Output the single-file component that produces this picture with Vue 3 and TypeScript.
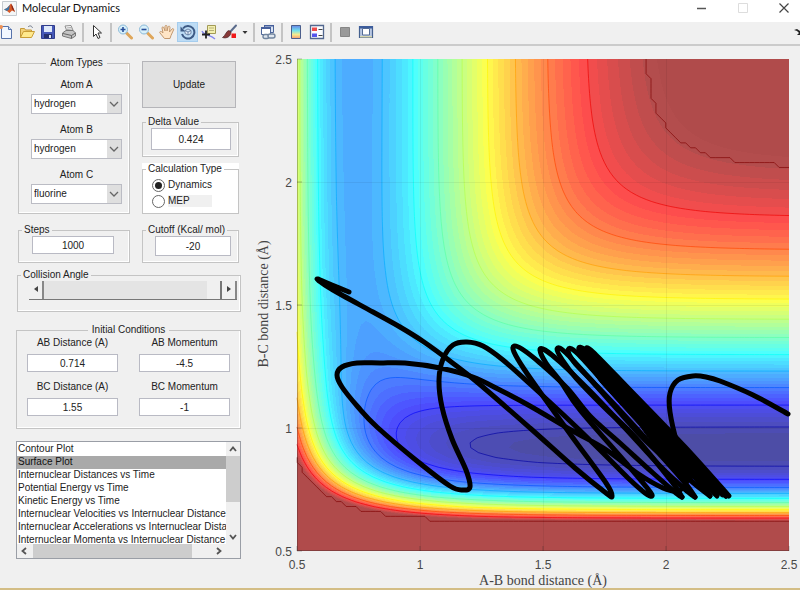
<script setup lang="ts">
import { ref } from 'vue'

type Point = [number, number]
interface Morse { depth: number; beta: number; r0: number; sato: number }

const atoms = ['hydrogen', 'fluorine', 'deuterium', 'chlorine']
const atomRows = ref([
  { id: 'atom-a', label: 'Atom A', value: 'hydrogen' },
  { id: 'atom-b', label: 'Atom B', value: 'hydrogen' },
  { id: 'atom-c', label: 'Atom C', value: 'fluorine' },
])
const delta = ref('0.424')
const calculation = ref('dynamics')
const steps = ref('1000')
const cutoff = ref('-20')
const angle = ref(180)
const conditions = ref([
  { id: 'ab-dist', label: 'AB Distance (A)', value: '0.714' },
  { id: 'ab-mom', label: 'AB Momentum', value: '-4.5' },
  { id: 'bc-dist', label: 'BC Distance (A)', value: '1.55' },
  { id: 'bc-mom', label: 'BC Momentum', value: '-1' },
])
const plotTypes = [
  'Contour Plot',
  'Surface Plot',
  'Internuclear Distances vs Time',
  'Potential Energy vs Time',
  'Kinetic Energy vs Time',
  'Internuclear Velocities vs Internuclear Distance',
  'Internuclear Accelerations vs Internuclear Distance',
  'Internuclear Momenta vs Internuclear Distance',
]
const plotType = ref('Surface Plot')

// LEPS potential energy surface for collinear H + H-F, in kcal/mol
const HH: Morse = { depth: 109.5, beta: 1.942, r0: 0.7414, sato: 0.2 }
const HF: Morse = { depth: 141.2, beta: 2.2187, r0: 0.917, sato: 0.167 }
const terms = (m: Morse, r: number): Point => {
  const e = Math.exp(-m.beta * (r - m.r0))
  const k = m.sato
  const c = m.depth / (4 * (1 + k))
  return [c * ((3 + k) * e * e - (2 + 6 * k) * e), c * ((1 + 3 * k) * e * e - (6 + 2 * k) * e)]
}
const energy = (ab: number, bc: number): number => {
  const [q1, j1] = terms(HH, ab)
  const [q2, j2] = terms(HF, bc)
  const [q3, j3] = terms(HF, ab + bc)
  return q1 + q2 + q3 - Math.sqrt(((j1 - j2) ** 2 + (j2 - j3) ** 2 + (j3 - j1) ** 2) / 2)
}

const N = 100
const LEFT = 297
const TOP = 59
const SIZE = 492
const px = (i: number) => LEFT + (i * SIZE) / N
const py = (j: number) => TOP + SIZE - (j * SIZE) / N
const field: number[][] = []
for (let j = 0; j <= N; j++) {
  const row: number[] = []
  for (let i = 0; i <= N; i++) row.push(energy(0.5 + i * 0.02, 0.5 + j * 0.02))
  field.push(row)
}
const mask = field.map(row => row.map(v => (v > -22.2 ? 1 : -20)))

const clamp = (v: number) => Math.max(0, Math.min(1, v))
const jet = (level: number, alpha: number): string => {
  const f = clamp((level + 141) / 121)
  const mix = (v: number) => Math.round(255 * (clamp(v) * alpha + 1 - alpha))
  return `rgb(${mix(1.5 - Math.abs(4 * f - 3))},${mix(1.5 - Math.abs(4 * f - 2))},${mix(1.5 - Math.abs(4 * f - 1))})`
}

const fix = (p: Point) => `${p[0].toFixed(2)} ${p[1].toFixed(2)}`

// Area of one grid cell below the level, and the level line that bounds it
const cell = (data: number[][], i: number, j: number, level: number) => {
  const corner: Point[] = [[i, j], [i + 1, j], [i + 1, j + 1], [i, j + 1]]
  const area: Point[] = []
  const cuts: Point[] = []
  for (let k = 0; k < 4; k++) {
    const a = corner[k]
    const b = corner[(k + 1) % 4]
    const va = data[a[1]][a[0]]
    const vb = data[b[1]][b[0]]
    if (va <= level) area.push([px(a[0]), py(a[1])])
    if (va <= level !== vb <= level) {
      const t = (level - va) / (vb - va)
      const p: Point = [px(a[0] + (b[0] - a[0]) * t), py(a[1] + (b[1] - a[1]) * t)]
      area.push(p)
      cuts.push(p)
    }
  }
  return { area, cuts }
}

const linePath = (data: number[][], level: number): string => {
  let d = ''
  for (let j = 0; j < N; j++)
    for (let i = 0; i < N; i++) {
      const { cuts } = cell(data, i, j, level)
      for (let k = 0; k + 1 < cuts.length; k += 2) d += `M${fix(cuts[k])}L${fix(cuts[k + 1])}`
    }
  return d
}

const areaPath = (level: number): string => {
  let d = ''
  for (let j = 0; j < N; j++) {
    let start = -1
    for (let i = 0; i <= N; i++) {
      const full = i < N && field[j][i] <= level && field[j][i + 1] <= level && field[j + 1][i] <= level && field[j + 1][i + 1] <= level
      if (full && start < 0) start = i
      if (!full && start >= 0) {
        d += `M${fix([px(start), py(j)])}H${px(i).toFixed(2)}V${py(j + 1).toFixed(2)}H${px(start).toFixed(2)}Z`
        start = -1
      }
      if (!full && i < N) {
        const { area } = cell(field, i, j, level)
        if (area.length > 2) d += 'M' + area.map(fix).join('L') + 'Z'
      }
    }
  }
  return d
}

const STEP = 10.4
const BASE = -136.8
const bands: { d: string; fill: string }[] = []
for (let n = 56; n >= -1; n--) {
  const level = BASE + (n * STEP) / 5
  if (level < -20) bands.push({ d: areaPath(level), fill: jet(level - 2, 0.7) })
}
const lines: { d: string; stroke: string }[] = []
for (let n = 0; n <= 10; n++) {
  const level = BASE + n * STEP
  lines.push({ d: linePath(field, level), stroke: jet(level, 1) })
}
const cliff = linePath(mask, 0)

const ticks = [
  { x: 297, y: 551, label: '0.5' },
  { x: 420, y: 428, label: '1' },
  { x: 543, y: 305, label: '1.5' },
  { x: 666, y: 182, label: '2' },
  { x: 789, y: 59, label: '2.5' },
]

// Smooth curve through the sampled trajectory points
const smooth = (pts: Point[]): string => {
  let d = `M${pts[0][0]} ${pts[0][1]}`
  for (let i = 0; i + 1 < pts.length; i++) {
    const p0 = pts[Math.max(0, i - 1)]
    const p1 = pts[i]
    const p2 = pts[i + 1]
    const p3 = pts[Math.min(pts.length - 1, i + 2)]
    const c1: Point = [p1[0] + (p2[0] - p0[0]) / 6, p1[1] + (p2[1] - p0[1]) / 6]
    const c2: Point = [p2[0] - (p3[0] - p1[0]) / 6, p2[1] - (p3[1] - p1[1]) / 6]
    d += `C${fix(c1)} ${fix(c2)} ${fix(p2)}`
  }
  return d
}
const trajectory = [
  smooth([[349, 292], [332, 285], [317, 279], [333, 290], [373, 312], [400, 327], [424, 342], [450, 361], [477, 382], [530, 428], [575, 468], [606, 493], [612, 496], [606, 483], [573, 438], [545, 399], [524, 369], [514, 352], [514, 346], [522, 349], [540, 363], [567, 388], [590, 416], [620, 443], [653, 473], [676, 493], [682, 497]]),
  smooth([[788, 414], [753, 395], [720, 381], [706, 377], [693, 376], [678, 380], [670, 393], [670, 412], [677, 443], [687, 472], [686, 483], [678, 491], [663, 488], [637, 473], [605, 449], [571, 430], [530, 406], [498, 389], [473, 377], [440, 368], [405, 363], [380, 363], [357, 363], [342, 367], [337, 375], [342, 387], [358, 407], [377, 427], [417, 461], [450, 486], [463, 490], [470, 487], [466, 470], [452, 439], [442, 407], [439, 380], [443, 359], [453, 345], [467, 342], [483, 346], [503, 360], [530, 384], [570, 421], [602, 452], [628, 478], [645, 493], [652, 496], [648, 489], [626, 463], [580, 410], [561, 382], [546, 363], [540, 350], [545, 350], [560, 362], [590, 391], [625, 428], [660, 466], [688, 492], [695, 497]]),
  smooth([[682, 497], [672, 482], [635, 437], [605, 408], [576, 378], [563, 361], [557, 349], [566, 353], [600, 390], [645, 440], [690, 480], [710, 496]]),
  smooth([[695, 497], [680, 477], [625, 416], [592, 381], [574, 362], [568, 350], [578, 354], [620, 400], [670, 450], [717, 496]]),
  smooth([[710, 496], [685, 466], [630, 410], [596, 373], [579, 350], [590, 354], [640, 406], [695, 464], [726, 496]]),
  smooth([[726, 496], [700, 466], [648, 413], [610, 372], [588, 351], [593, 352], [630, 390], [685, 447], [729, 496]]),
]
const bundle = 'M579 350L592 349L620 381L643 404L679 441L731 496L722 497L706 485L693 478L686 482L657 450L640 426L600 382Z'
</script>

<template>
  <div class="window">
    <header class="titlebar">
      <svg class="logo" viewBox="0 0 15 15" aria-hidden="true">
        <path d="M.5.5h14v14H.5z" fill="#f4f6f7" stroke="#c5cbd0" />
        <path d="M2 8.500 5 7l4-4.500 1.500 2.500 2.500 6-3-1.500-2.500 2.500L5 10z" fill="#d95a27" />
        <path d="M2 8.500 5 7l3-3-1 4.500L5 10z" fill="#3b78a8" />
        <path d="M9 2.500 10 8l3 3-2.500-6z" fill="#8c2818" />
      </svg>
      <h1>Molecular Dynamics</h1>
      <div class="controls">
        <button aria-label="Minimize"><svg viewBox="0 0 12 12"><path d="M1 6.500h9" stroke="#555" stroke-width="1.500" /></svg></button>
        <button aria-label="Maximize" disabled><svg viewBox="0 0 12 12"><path d="M1.500 1.500h9v9h-9z" fill="none" stroke="#ddd" /></svg></button>
        <button aria-label="Close"><svg viewBox="0 0 12 12"><path d="m1.500 1.500 9 9m0-9-9 9" stroke="#444" stroke-width="1.200" /></svg></button>
      </div>
    </header>

    <nav class="toolbar" aria-label="Figure tools">
      <button aria-label="New"><svg viewBox="0 0 16 16"><path d="M3.500 2.500h7l3 3v9h-10z" fill="#f2f7ff" stroke="#5773ab" /><path d="M10.500 2.500v3h3" fill="#cfdef5" stroke="#5773ab" /><circle cx="3" cy="3" r="2" fill="#ee9155" /></svg></button>
      <button aria-label="Open"><svg viewBox="0 0 16 16"><path d="M1.500 13.500v-9h4l1 1.500h6v2" fill="#f3d27a" stroke="#c49a3b" /><path d="m1.500 13.500 3-6h11l-3 6z" fill="#ffe98d" stroke="#c99d36" /><path d="M9 3c2-2 4-1 4.500 1" fill="none" stroke="#6d7788" /></svg></button>
      <button aria-label="Save"><svg viewBox="0 0 16 16"><path d="M1.500 1.500h13v13h-13z" fill="#4658b8" stroke="#303d8c" /><path d="M4 2h8v6H4z" fill="#dfe9fa" /><path d="M4 10h8v4H4z" fill="#26306d" /><path d="M9 11h2v3H9z" fill="#d8def2" /></svg></button>
      <button aria-label="Print"><svg viewBox="0 0 16 16"><path d="m4 2 6-.500 2.500 6H6z" fill="#fff" stroke="#8c8c8c" /><path d="m1.500 9 3.500-2.500h7l2.500 2.500v3l-4 2.500-9-2.500z" fill="#c4c4c4" stroke="#777" /><path d="m2 9.500 8.500 2v3M10.500 11.500l4-2.500" fill="none" stroke="#666" /><path d="m5.500 4 5-.500M6 5.500l5-.500" stroke="#aaa" /></svg></button>
      <i class="sep" />
      <button aria-label="Select"><svg viewBox="0 0 16 16"><path d="M4.500 1.500v11L7 10l2 4.500 2-1L9 9h3.500z" fill="#fff" stroke="#333" /></svg></button>
      <i class="sep" />
      <button aria-label="Zoom in"><svg viewBox="0 0 16 16"><path d="m9.500 9 5 5" stroke="#dfa65a" stroke-width="3" stroke-linecap="round" /><circle cx="6" cy="5.500" r="4.500" fill="#d8f0fa" stroke="#8ab9d8" /><path d="M3.500 5.500h5M6 3v5" stroke="#294f9a" stroke-width="1.600" /></svg></button>
      <button aria-label="Zoom out"><svg viewBox="0 0 16 16"><path d="m9.500 9 5 5" stroke="#dfa65a" stroke-width="3" stroke-linecap="round" /><circle cx="6" cy="5.500" r="4.500" fill="#d8f0fa" stroke="#8ab9d8" /><path d="M3.500 5.500h5" stroke="#294f9a" stroke-width="1.600" /></svg></button>
      <button aria-label="Pan"><svg viewBox="0 0 16 16"><path d="M5.500 14.500 1 9c-1-1.500 1-2 2-1l1 1-1-5c0-1.500 1.500-1.500 2 0l1 3V2.500c0-1.500 2-1.500 2 0V7l1-4c.5-1.500 2-1 2 .5L10.500 8 13 5c1-1 2 0 1.500 1L12 11.500l-1 3z" fill="#ffe5c6" stroke="#c2986f" /></svg></button>
      <button class="active" aria-label="Rotate 3D" aria-pressed="true"><svg viewBox="0 0 16 16"><path d="M3 4.500A6.300 6.300 0 1 1 2 10" fill="none" stroke="#3d5a85" stroke-width="2" /><path d="M.5 2.500v5h5z" fill="#3d5a85" /><path d="m8 5 3 1.500v3L8 11 5 9.500v-3zM5 6.500 8 8l3-1.500M8 8v3" fill="#e4eefa" stroke="#566f96" stroke-width=".8" /></svg></button>
      <button aria-label="Data cursor"><svg viewBox="0 0 16 16"><path d="M6.500 1.500h8v8h-8z" fill="#f3efb0" stroke="#a29a55" /><path d="M8 4h5M8 6.500h5" stroke="#b7b078" /><path d="M1 7c2 5 8 3 13 8" fill="none" stroke="#8588ed" stroke-width="1.300" /><path d="M1 10.500h8M5 6.500v8" stroke="#222" stroke-width="1.800" /></svg></button>
      <button aria-label="Brush"><svg viewBox="0 0 16 16"><path d="m8 8 6-6.500" stroke="#5a6b8b" stroke-width="2" stroke-linecap="round" /><path d="M9 8 7 6.500C4 7 4 11 .5 13.500 5 15 9 12 9 8z" fill="#883838" stroke="#4a2528" stroke-width=".7" /><path d="M9.500 9.500h4.500V14H9.500z" fill="#f01919" /></svg></button>
      <button class="drop" aria-label="Brush options"><svg viewBox="0 0 10 16"><path d="M2.500 7h5L5 10z" fill="#333" /></svg></button>
      <i class="sep" />
      <button aria-label="Link plot"><svg viewBox="0 0 16 16"><path d="M4.500 1.500h9v7h-9z" fill="#d9e4f4" stroke="#4c659a" /><path d="M1.500 3.500h9v7h-9z" fill="#fff" stroke="#4c659a" /><path d="M1 3h10v2H1zM4 1h10v1.500H4z" fill="#465f9b" /><rect x="3" y="10.500" width="6" height="4" rx="2" fill="#dfe6ee" stroke="#71859f" stroke-width="1.400" /><rect x="8" y="10" width="7" height="4" rx="2" fill="#dfe6ee" stroke="#71859f" stroke-width="1.400" /></svg></button>
      <i class="sep" />
      <button aria-label="Insert colorbar"><svg viewBox="0 0 16 16"><defs><linearGradient id="bar" x2="0" y2="1"><stop stop-color="#6685e8" /><stop offset=".4" stop-color="#72e3ed" /><stop offset=".7" stop-color="#f8eb8b" /><stop offset="1" stop-color="#f29b73" /></linearGradient></defs><path d="M3.500 1.500h9v13h-9z" fill="url(#bar)" stroke="#4c5f8c" /></svg></button>
      <button aria-label="Insert legend"><svg viewBox="0 0 16 16"><path d="M1.500 1.500h13v13h-13z" fill="#fbfcff" stroke="#52678f" stroke-width="1.300" /><path d="M3 3.500h5v3.500H3z" fill="#ef4a4a" /><path d="M3 9.500h5V13H3z" fill="#5555eb" /><path d="M9.500 5.500h4M9.500 11.500h4" stroke="#444" /></svg></button>
      <i class="sep" />
      <button aria-label="Hide plot tools"><svg viewBox="0 0 16 16"><path d="M3.500 3.500h9v9h-9z" fill="#999" stroke="#858585" /></svg></button>
      <button aria-label="Show plot tools"><svg viewBox="0 0 16 16"><path d="M1.500 2.500h13v11h-13z" fill="#b9c8e2" stroke="#45618f" stroke-width="1.200" /><path d="M1 2h14v2.500H1z" fill="#3d5d9c" /><path d="M4.500 4.500h7v6.500h-7z" fill="#fff" stroke="#536b94" /><path d="M2 12h12v1.500H2z" fill="#d8d7ad" /></svg></button>
      <button class="dock" aria-label="Dock figure"><svg viewBox="0 0 16 16"><path d="m3 6 3-1 3 2 2-1v5H6l2-2-2-2z" fill="#222" /></svg></button>
    </nav>

    <main>
      <form class="panel" @submit.prevent>
        <div class="pair">
          <fieldset class="atoms">
            <legend>Atom Types</legend>
            <div v-for="row in atomRows" :key="row.id" class="atom">
              <label :for="row.id">{{ row.label }}</label>
              <div class="combo">
                <select :id="row.id" v-model="row.value">
                  <option v-for="a in atoms" :key="a">{{ a }}</option>
                </select>
                <svg viewBox="0 0 14 18" aria-hidden="true"><path d="m3 7 4 4 4-4" fill="none" stroke="#666" stroke-width="1.300" /></svg>
              </div>
            </div>
          </fieldset>
          <div class="side">
            <button class="update" type="submit">Update</button>
            <fieldset class="delta">
              <legend>Delta Value</legend>
              <div class="field"><input v-model="delta" aria-label="Delta Value" type="text"></div>
            </fieldset>
            <div class="white">
              <fieldset class="calc">
                <legend>Calculation Type</legend>
                <label><input v-model="calculation" type="radio" name="calc" value="dynamics">Dynamics</label>
                <label><input v-model="calculation" type="radio" name="calc" value="mep"><span class="shade">MEP</span></label>
              </fieldset>
            </div>
          </div>
        </div>

        <div class="pair small">
          <fieldset class="steps">
            <legend>Steps</legend>
            <div class="field"><input v-model="steps" aria-label="Steps" type="text"></div>
          </fieldset>
          <fieldset class="cutoff">
            <legend>Cutoff (Kcal/ mol)</legend>
            <div class="field"><input v-model="cutoff" aria-label="Cutoff (Kcal/ mol)" type="text"></div>
          </fieldset>
        </div>

        <fieldset class="collision">
          <legend>Collision Angle</legend>
          <div class="slider">
            <button type="button" aria-label="Decrease angle" @click="angle = Math.max(0, angle - 1)"><svg viewBox="0 0 8 8"><path d="M6 1v6L2 4z" fill="#444" /></svg></button>
            <input v-model.number="angle" type="range" min="0" max="180" aria-label="Collision Angle">
            <button type="button" aria-label="Increase angle" @click="angle = Math.min(180, angle + 1)"><svg viewBox="0 0 8 8"><path d="M2 1v6l4-3z" fill="#444" /></svg></button>
          </div>
        </fieldset>

        <fieldset class="initial">
          <legend>Initial Conditions</legend>
          <div v-for="c in conditions" :key="c.id" class="condition">
            <label :for="c.id">{{ c.label }}</label>
            <input :id="c.id" v-model="c.value" type="text">
          </div>
        </fieldset>

        <div class="listbox">
          <select v-model="plotType" size="8" aria-label="Plot type">
            <option v-for="p in plotTypes" :key="p">{{ p }}</option>
          </select>
          <div class="vbar">
            <svg viewBox="0 0 14 14"><path d="m4 9 3-3.500L10 9" fill="none" stroke="#555" stroke-width="1.800" /></svg>
            <div class="vthumb" />
            <svg viewBox="0 0 14 14"><path d="m4 5 3 3.500L10 5" fill="none" stroke="#555" stroke-width="1.800" /></svg>
          </div>
          <div class="hbar">
            <svg viewBox="0 0 14 14"><path d="M9 4 5.500 7 9 10" fill="none" stroke="#555" stroke-width="1.800" /></svg>
            <div class="hthumb" />
            <svg viewBox="0 0 14 14"><path d="M5 4l3.500 3L5 10" fill="none" stroke="#555" stroke-width="1.800" /></svg>
          </div>
        </div>
      </form>

      <svg class="plot" viewBox="250 46 550 542" role="img" aria-label="Potential energy surface with trajectory">
        <rect x="297" y="59" width="492" height="492" fill="#b04b4b" />
        <g shape-rendering="crispEdges">
          <path v-for="(b, i) in bands" :key="i" :d="b.d" :fill="b.fill" />
        </g>
        <g class="contours">
          <path v-for="(l, i) in lines" :key="i" :d="l.d" :stroke="l.stroke" />
          <path :d="cliff" class="cliff" />
        </g>
        <g class="grid">
          <path v-for="t in ticks.slice(1, 4)" :key="t.label" :d="`M${t.x + 0.5} 59V551M297 ${t.y + 0.5}H789`" />
        </g>
        <path class="frame" d="M297.500 59V550.500H789" />
        <path v-for="t in ticks" :key="t.label" class="tick" :d="`M${t.x} 551v-5M297 ${t.y}h5`" />
        <g class="trajectory">
          <path v-for="(d, i) in trajectory" :key="i" :d="d" />
          <path :d="bundle" class="bundle" />
        </g>
        <g class="labels">
          <text v-for="t in ticks" :key="t.label" :x="t.x" y="569" text-anchor="middle">{{ t.label }}</text>
          <text v-for="t in ticks" :key="t.label" x="292" :y="t.y + 5" text-anchor="end">{{ t.label }}</text>
        </g>
        <g class="axis">
          <text x="543" y="585" text-anchor="middle">A-B bond distance (Å)</text>
          <text transform="translate(268 304) rotate(-90)" text-anchor="middle">B-C bond distance (Å)</text>
        </g>
      </svg>
    </main>
  </div>
</template>

<style>
body {
  background: #f0f0f0;
}
</style>

<style scoped>
* {
  box-sizing: border-box;
}
.window {
  background: #f0f0f0;
  border-bottom: 2px solid #d3bd85;
  color: #222;
  font: 10px/12px "Liberation Sans", Arial, sans-serif;
  overflow: hidden;
}
button,
input,
select {
  font: inherit;
  color: inherit;
  margin: 0;
}
.titlebar {
  display: flex;
  align-items: center;
  height: 22px;
  padding: 0 6px 6px 2px;
  background: #fff;
}
.logo {
  width: 15px;
  height: 15px;
}
h1 {
  margin: 0 0 0 5px;
  font: 11px/16px Lato, "Open Sans", sans-serif;
  color: #111;
}
.controls {
  display: flex;
  gap: 21px;
  margin-left: auto;
}
.controls button {
  width: 20px;
  height: 16px;
  padding: 0;
  border: 0;
  background: none;
}
.controls svg {
  display: block;
  width: 12px;
  height: 12px;
  margin: 2px auto;
}
.toolbar {
  display: flex;
  height: 24px;
  padding-bottom: 1px;
  margin-left: -5px;
  border-bottom: 2px solid #cbcbcb;
}
.toolbar button {
  flex: none;
  display: flex;
  align-items: center;
  justify-content: center;
  width: 21px;
  height: 20px;
  padding: 0;
  border: 0;
  background: none;
}
.toolbar svg {
  width: 16px;
  height: 16px;
}
.toolbar .active {
  background: #bddcf5;
  box-shadow: inset 0 0 0 1px #a5cdee;
}
.toolbar .drop {
  width: 10px;
}
.toolbar .drop svg {
  width: 10px;
}
.toolbar .dock {
  margin: 0 -9px 0 auto;
}
.sep {
  flex: none;
  width: 2px;
  height: 19px;
  margin: 1px 2px 0 3px;
  background: #c4c4c4;
}
main {
  display: flex;
  align-items: flex-start;
}
.panel {
  flex: none;
  width: 250px;
  padding: 11px 9px 0 16px;
}
.plot {
  display: block;
  flex: 1;
  min-width: 0;
}
fieldset {
  min-width: 0;
  margin: 0;
  padding: 0;
  border: 1px solid #c4c4c4;
  box-shadow: inset -1px -1px 0 #fff;
}
legend {
  margin-left: 3px;
  padding: 0 2px;
  line-height: 12px;
  white-space: nowrap;
}
.pair {
  display: grid;
  grid-template-columns: 112px 97px;
  gap: 12px;
  padding-left: 2px;
}
.atoms {
  display: flex;
  flex-direction: column;
  height: 157px;
  padding: 10px 7px 0 12px;
}
.atoms legend,
.initial legend {
  margin: 0 auto;
  padding: 0 4px;
}
.atom {
  display: grid;
  gap: 3px;
  margin-bottom: 10px;
}
.atom label {
  text-align: center;
}
.combo {
  display: flex;
  position: relative;
}
.combo select {
  flex: 1;
  height: 20px;
  padding: 0 0 0 2px;
  border: 1px solid #bbbcc4;
  border-radius: 0;
  background: #fff;
  appearance: none;
}
.combo svg {
  position: absolute;
  right: 1px;
  top: 1px;
  width: 14px;
  height: 18px;
  background: #dfdfdf;
  pointer-events: none;
}
.side {
  display: flex;
  flex-direction: column;
  padding-top: 4px;
}
.update {
  height: 47px;
  margin-right: 3px;
  border: 1px solid #b5b5b9;
  background: #e1e1e1;
}
.delta {
  height: 41px;
  margin-top: 8px;
}
.field {
  padding: 0 7px 0 8px;
}
input[type="text"] {
  display: block;
  width: 100%;
  height: 18px;
  padding: 0;
  border: 1px solid #b9bac4;
  background: #fff;
  text-align: center;
}
.delta input[type="text"] {
  height: 22px;
}
.white {
  margin-top: 6px;
  background: #fff;
}
.calc {
  height: 51px;
}
.calc label {
  display: flex;
  align-items: center;
  gap: 3px;
  height: 16px;
  padding-left: 9px;
}
.calc legend + label {
  margin-top: 2px;
}
.calc input {
  flex: none;
  display: grid;
  place-items: center;
  width: 13px;
  height: 13px;
  border: 1px solid #666;
  border-radius: 50%;
  background: #fff;
  appearance: none;
}
.calc input:checked::before {
  content: "";
  width: 7px;
  height: 7px;
  border-radius: 50%;
  background: #222;
}
.shade {
  width: 44px;
  background: #f0f0f0;
}
.small {
  margin-top: 10px;
}
.steps,
.cutoff {
  height: 39px;
}
.steps .field {
  padding: 0 15px 0 13px;
}
.cutoff .field {
  padding: 0 7px 0 12px;
}
.cutoff input[type="text"] {
  height: 20px;
}
.collision {
  height: 43px;
  margin: 6px 0 0 1px;
}
.slider {
  display: flex;
  height: 19px;
  margin: 0 3px 0 11px;
  border-bottom: 1px solid #777;
}
.slider button {
  flex: none;
  width: 15px;
  padding: 0;
  border: 0;
  border-right: 2px solid #888;
  background: #f0f0f0;
}
.slider svg {
  width: 8px;
  height: 8px;
}
.slider input {
  flex: 1;
  min-width: 0;
  height: 18px;
  background: #e4e4e4;
  appearance: none;
}
.slider input::-webkit-slider-thumb {
  width: 15px;
  height: 18px;
  border-right: 2px solid #777;
  background: #f0f0f0;
  appearance: none;
}
.initial {
  display: grid;
  grid-template-columns: 91px 91px;
  column-gap: 21px;
  row-gap: 9px;
  align-content: start;
  height: 105px;
  margin-top: 12px;
  padding: 1px 10px 0;
}
.condition {
  display: grid;
  align-content: start;
  gap: 5px;
  text-align: center;
}
.listbox {
  display: grid;
  grid-template: 102px 14px / 1fr 14px;
  margin-top: 12px;
  border: 1px solid #9a9ea6;
}
.listbox select {
  min-width: 0;
  height: 102px;
  padding: 1px 0 0;
  border: 0;
  border-radius: 0;
  outline: 0;
  background: #fff;
  overflow: hidden;
  scrollbar-width: none;
}
.listbox option {
  height: 13px;
  min-height: 13px;
  padding: 0 1px;
  line-height: 13px;
  color: #222;
}
.listbox option:checked {
  background: #a9a9a9 linear-gradient(#a9a9a9, #a9a9a9);
  color: #111;
}
.vbar,
.hbar {
  display: flex;
  align-items: center;
}
.vbar {
  flex-direction: column;
  justify-content: space-between;
}
.vbar svg,
.hbar svg {
  flex: none;
  width: 14px;
  height: 14px;
}
.vthumb {
  width: 14px;
  height: 46px;
  margin-bottom: auto;
  background: #cdcdcd;
}
.hbar {
  gap: 2px;
}
.hthumb {
  width: 159px;
  height: 14px;
  margin-right: 18px;
  background: #cdcdcd;
}
.contours path {
  fill: none;
  stroke-width: 1;
  opacity: 0.65;
}
.contours .cliff {
  stroke: #800000;
}
.grid path {
  stroke: #000;
  stroke-opacity: 0.06;
}
.frame,
.tick {
  fill: none;
  stroke: #222;
  stroke-opacity: 0.3;
}
.trajectory path {
  fill: none;
  stroke: #000;
  stroke-width: 5;
  stroke-linejoin: round;
  stroke-linecap: round;
}
.trajectory .bundle {
  stroke-width: 1;
  fill: #000;
}
.labels {
  fill: #484848;
  font: 12px "Liberation Sans", Arial, sans-serif;
}
.axis {
  fill: #444;
  font: 14px "Liberation Serif", "Times New Roman", serif;
}
</style>
